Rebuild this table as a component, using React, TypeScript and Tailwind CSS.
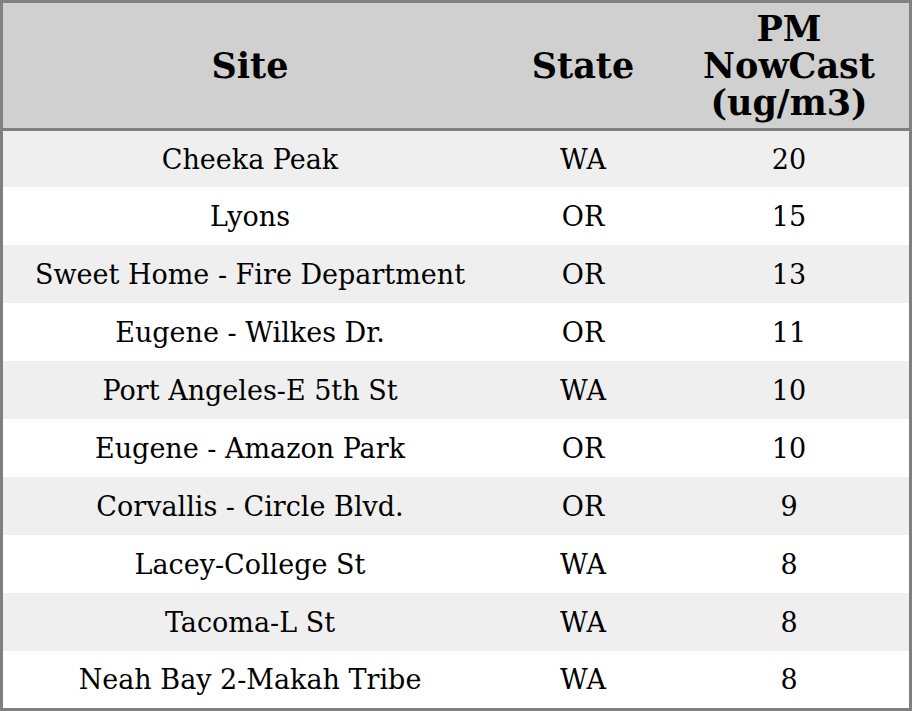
import React from 'react';

interface Reading {
  site: string;
  state: string;
  pm: number;
}

const readings: Reading[] = [
  { site: 'Cheeka Peak', state: 'WA', pm: 20 },
  { site: 'Lyons', state: 'OR', pm: 15 },
  { site: 'Sweet Home - Fire Department', state: 'OR', pm: 13 },
  { site: 'Eugene - Wilkes Dr.', state: 'OR', pm: 11 },
  { site: 'Port Angeles-E 5th St', state: 'WA', pm: 10 },
  { site: 'Eugene - Amazon Park', state: 'OR', pm: 10 },
  { site: 'Corvallis - Circle Blvd.', state: 'OR', pm: 9 },
  { site: 'Lacey-College St', state: 'WA', pm: 8 },
  { site: 'Tacoma-L St', state: 'WA', pm: 8 },
  { site: 'Neah Bay 2-Makah Tribe', state: 'WA', pm: 8 },
];

// first row sits under the header rule, last one over the bottom border
const rowHeight = (i: number) => {
  if (i === 0) return 'h-[56px]';
  if (i === readings.length - 1) return 'h-[57px]';
  return 'h-[58px]';
};

export default function App() {
  return (
    <div
      className="w-[912px] h-[711px] border-[3px] border-[#808080] bg-white text-black"
      style={{ fontFamily: '"DejaVu Serif", serif' }}
    >
      {/* Header */}
      <div className="grid grid-cols-[494px_172px_240px] h-[128px] bg-[#d0d0d0] border-b-[3px] border-[#808080] text-[35px] font-bold leading-[37px]">
        <div className="flex items-center justify-center">Site</div>
        <div className="flex items-center justify-center">State</div>
        <div className="flex flex-col items-center justify-center text-center">
          <span>PM</span>
          <span>NowCast</span>
          <span>(ug/m3)</span>
        </div>
      </div>

      {/* Rows */}
      {readings.map((r, i) => (
        <div
          key={r.site}
          className={`grid grid-cols-[494px_172px_240px] ${rowHeight(i)} text-[27px] ${
            i % 2 === 0 ? 'bg-[#efefef]' : 'bg-white'
          }`}
        >
          <div className="flex items-center justify-center pt-[2px]">{r.site}</div>
          <div className="flex items-center justify-center pt-[2px]">{r.state}</div>
          <div className="flex items-center justify-center pt-[2px]">{r.pm}</div>
        </div>
      ))}
    </div>
  );
}
